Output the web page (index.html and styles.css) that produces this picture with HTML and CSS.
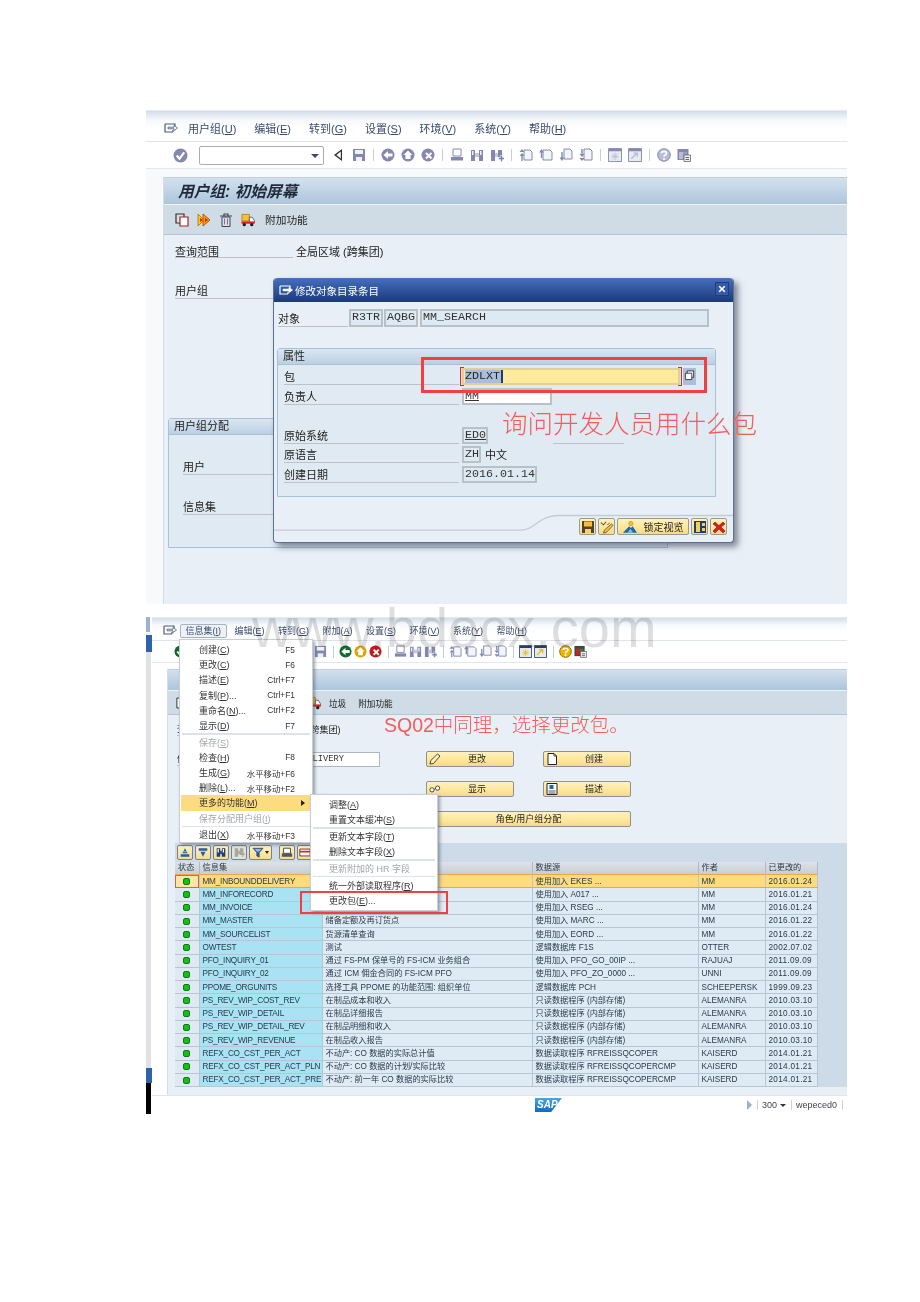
FILE: index.html
```html
<!DOCTYPE html>
<html lang="zh-CN">
<head>
  <meta charset="UTF-8">
  <title>SQ01 / SQ02</title>
  <link rel="stylesheet" href="styles.css">
</head>
<body>
  <!-- icon set -->
  <svg class="defs" aria-hidden="true">
    <symbol id="i-menu" viewBox="0 0 14 11"><path d="M1 1h10v2M1 1v8h8M9 9V7M4 5h6M4 5" fill="none" stroke="currentColor" stroke-width="1.2"/><path d="M4 4.2h6V2.5L13.5 5 10 7.5V5.8H4z" fill="#fff" stroke="currentColor" stroke-width=".8"/></symbol>
    <symbol id="i-check" viewBox="0 0 14 14"><circle cx="7" cy="7" r="6.5" fill="currentColor"/><path d="M3.5 7l2.5 3 4.500-6" fill="none" stroke="#fff" stroke-width="2"/></symbol>
    <symbol id="i-back" viewBox="0 0 14 14"><circle cx="7" cy="7" r="6.500" fill="currentColor"/><path d="M2.500 7L7 3v2.500h4.500v3H7V11z" fill="#fff"/></symbol>
    <symbol id="i-up" viewBox="0 0 14 14"><circle cx="7" cy="7" r="6.500" fill="currentColor"/><path d="M7 2.500L11.500 7H9.500v4h-5V7H2.500z" fill="#fff"/></symbol>
    <symbol id="i-x" viewBox="0 0 14 14"><circle cx="7" cy="7" r="6.500" fill="currentColor"/><path d="M5 5l5.500 5.500M10.500 5L5 10.500" stroke="#fff" stroke-width="2"/></symbol>
    <symbol id="i-save" viewBox="0 0 14 14"><path d="M1 1h12v12H1z" fill="currentColor"/><path d="M3 2h8v4H3z" fill="#eef1f6"/><path d="M4 9h6v4H4z" fill="#eef1f6"/></symbol>
    <symbol id="i-print" viewBox="0 0 14 14"><path d="M3 1h8v7H3z" fill="#fff" stroke="currentColor"/><path d="M1 9h12v3.500H1z" fill="currentColor"/></symbol>
    <symbol id="i-find" viewBox="0 0 14 14"><path d="M1 2h4v11H1zM9 2h4v11H9z" fill="currentColor"/><path d="M5 5h4v4H5z" fill="#c5c8d8"/><path d="M2 3h1.500v4H2zM10 3h1.500v4H10z" fill="#eef"/></symbol>
    <symbol id="i-findp" viewBox="0 0 14 14"><path d="M1 2h4v11H1zM8 2h4v7H8z" fill="currentColor"/><path d="M5 5h3v4H5z" fill="#c5c8d8"/><path d="M10.500 7.500h2v2h2v2h-2v2h-2v-2h-2v-2h2z" fill="#7c80a8" stroke="#fff" stroke-width=".5"/></symbol>
    <symbol id="i-first" viewBox="0 0 14 14"><path d="M5 2h6l2 2v8H5z" fill="#f4f5f9" stroke="currentColor"/><path d="M3 1L.5 4h5zM3 5L.5 8h5z" fill="currentColor"/><path d="M2.300 8h1.400v5H2.300z" fill="currentColor"/></symbol>
    <symbol id="i-prev" viewBox="0 0 14 14"><path d="M4 2h7l2 2v8H4z" fill="#f4f5f9" stroke="currentColor"/><path d="M2.500 1L0 4.500h5z" fill="currentColor"/><path d="M1.800 4h1.400v6H1.800z" fill="currentColor"/></symbol>
    <symbol id="i-next" viewBox="0 0 14 14"><path d="M5 1h6l2 2v8H5z" fill="#f4f5f9" stroke="currentColor"/><path d="M3 13L.5 9.500h5z" fill="currentColor"/><path d="M2.300 4h1.400v6H2.300z" fill="currentColor"/></symbol>
    <symbol id="i-last" viewBox="0 0 14 14"><path d="M5 1h6l2 2v9H5z" fill="#f4f5f9" stroke="currentColor"/><path d="M3 9L.5 6h5zM3 13L.5 10h5z" fill="currentColor"/><path d="M2.300 1h1.400v5H2.300z" fill="currentColor"/></symbol>
    <symbol id="i-win1" viewBox="0 0 15 15"><path d="M.5.5h14v14H.5z" fill="#e8eaf2" stroke="currentColor"/><path d="M1 1h13v2.500H1z" fill="currentColor"/><path d="M7.500 5v8M3.500 9h8M4.500 6l6 6M10.500 6l-6 6" stroke="var(--mark)" stroke-width="1"/></symbol>
    <symbol id="i-win2" viewBox="0 0 15 15"><path d="M.5.5h14v14H.5z" fill="#e8eaf2" stroke="currentColor"/><path d="M1 1h13v2.500H1z" fill="currentColor"/><path d="M3.500 11.500l6-6M6 5.500h4v4" fill="none" stroke="var(--mark)" stroke-width="1.500"/></symbol>
    <symbol id="i-help" viewBox="0 0 14 14"><circle cx="7" cy="7" r="6.300" fill="var(--mark)" stroke="currentColor" stroke-width="1"/><path d="M4.500 5.300C4.500 2.800 9.500 2.800 9.500 5.300 9.500 7 7 7 7 8.800" fill="none" stroke="#fff" stroke-width="1.700"/><circle cx="7" cy="11" r="1.100" fill="#fff"/></symbol>
    <symbol id="i-custom" viewBox="0 0 14 14"><path d="M.5 1h11v11H.5z" fill="currentColor"/><path d="M2 4h4v7H2z" fill="var(--mark)"/><path d="M6 4h4v3H6z" fill="var(--mark2)"/><path d="M7 7h6.500v6.500H7z" fill="#eef0f4" stroke="#666" stroke-width=".8"/><path d="M8.500 9.500h3.500M8.500 11.500h3.500" stroke="#666"/></symbol>

    <symbol id="i-copy" viewBox="0 0 14 14"><path d="M1 1h8v9H1z" fill="#d9dde6" stroke="#333" stroke-width="1.200"/><path d="M5 4h8v9H5z" fill="#fff" stroke="#a22" stroke-width="1.200"/></symbol>
    <symbol id="i-fwd" viewBox="0 0 14 14"><path d="M1 1l6 6-6 6z" fill="#fc0" stroke="#a70" stroke-width=".8"/><path d="M6 1l7 6-7 6z" fill="#f90" stroke="#a40" stroke-width=".8"/><path d="M3 5l3 2-3 2zM8 5l3 2-3 2z" fill="#d22"/></symbol>
    <symbol id="i-trash" viewBox="0 0 14 14"><path d="M1 3h12M5 3V1h4v2" fill="none" stroke="#445" stroke-width="1.200"/><path d="M3 4h8v9.500H3z" fill="#dde" stroke="#445"/><path d="M5.500 5.500v6M8.500 5.500v6" stroke="#778"/></symbol>
    <symbol id="i-truck" viewBox="0 0 15 14"><path d="M1 1h8v7H1z" fill="#fb3" stroke="#a70" stroke-width=".8"/><path d="M9 4h3l2.500 4v2H9z" fill="#fff" stroke="#444" stroke-width=".8"/><path d="M.5 8.500h14v2.500H.5z" fill="#d22"/><circle cx="3.500" cy="12" r="1.800" fill="#222"/><circle cx="11.500" cy="12" r="1.800" fill="#222"/></symbol>

    <symbol id="i-bsave" viewBox="0 0 14 14"><path d="M1 1h12v12H1z" fill="#4a4436"/><path d="M3 1.500h8v5H3z" fill="#fb3"/><path d="M4 9h6v4H4z" fill="#fc6"/></symbol>
    <symbol id="i-pencheck" viewBox="0 0 16 14"><path d="M1 2l3 2.500L7 1" fill="none" stroke="#555" stroke-width="1.300"/><path d="M13 3.500l2 1.500-7.500 8L4 14l1-3.500z" fill="#fb3" stroke="#444" stroke-width=".8"/><path d="M8 3.500l1 1L11 2" fill="none" stroke="#555"/></symbol>
    <symbol id="i-person" viewBox="0 0 16 14"><circle cx="9" cy="3" r="2.500" fill="#fb3" stroke="#975" stroke-width=".5"/><path d="M0 13.500L7 6l2 2 2-2 5 7.500z" fill="#26a"/><path d="M5 13.500L8.500 9l3 4.500z" fill="#8bd"/></symbol>
    <symbol id="i-fsave" viewBox="0 0 14 14"><path d="M1 1h12v12H1z" fill="#1d3e78"/><path d="M3 2h4v10H3z" fill="#fc5"/><path d="M9 3h3v3H9zM9 8h3v3H9z" fill="#fc5"/></symbol>
    <symbol id="i-cross" viewBox="0 0 14 14"><path d="M3 2l4 3.500L11 2l2 2-4 3 4 4-2 2-4-4-4 4-2-2 4-4-4-3z" fill="#d81e1e" stroke="#7a1212" stroke-width=".6"/></symbol>
    <symbol id="i-vh" viewBox="0 0 12 12"><path d="M3.500 1h7v7h-7z" fill="#fff" stroke="#223" stroke-width=".9"/><path d="M1.500 3.500h7v7h-7z" fill="#fff" stroke="#223" stroke-width=".9"/></symbol>

    <symbol id="i-pencil" viewBox="0 0 12 12"><path d="M8.500 1l2.500 2-6.500 7.500L1 11l.8-3.500z" fill="#fff2b0" stroke="#333" stroke-width=".9"/></symbol>
    <symbol id="i-glasses" viewBox="0 0 14 12"><circle cx="3.500" cy="7" r="2.500" fill="#fff" stroke="#333"/><circle cx="10" cy="5" r="2.500" fill="#fff" stroke="#333"/><path d="M6 6.500l1.500-1" stroke="#333"/></symbol>
    <symbol id="i-page" viewBox="0 0 10 12"><path d="M1 .5h6l2.500 2.500v8.500H1z" fill="#fff" stroke="#222"/><path d="M7 .5V3h2.500" fill="none" stroke="#222" stroke-width=".8"/></symbol>
    <symbol id="i-descr" viewBox="0 0 11 12"><path d="M.5.5h10v11H.5z" fill="#fff" stroke="#222"/><path d="M3 2h4v4H3z" fill="#26a"/><path d="M2 8h7M2 10h7" stroke="#555"/></symbol>

    <symbol id="i-abc" viewBox="0 0 14 12"><path d="M7 1l3 6H4z" fill="#2a60a8"/><path d="M2 8h10v3H2z" fill="#2a60a8"/><path d="M5 5h4" stroke="#fb3"/></symbol>
    <symbol id="i-cba" viewBox="0 0 14 12"><path d="M2 1h10v3H2z" fill="#2a60a8"/><path d="M4 5h6l-3 6z" fill="#2a60a8"/></symbol>
    <symbol id="i-bino" viewBox="0 0 14 12"><path d="M2 1h4v10H2zM8 1h4v10H8z" fill="#1d3e78"/><path d="M6 4h2v4H6z" fill="#1d3e78"/><path d="M3 2h1.500v4H3zM9 2h1.500v4H9z" fill="#fff"/></symbol>
    <symbol id="i-binop" viewBox="0 0 14 12"><path d="M2 1h4v10H2zM8 1h4v8H8z" fill="#a9a79a"/><path d="M6 4h2v4H6z" fill="#a9a79a"/><path d="M9 8h5M11.500 6v5" stroke="#a9a79a" stroke-width="1.500"/></symbol>
    <symbol id="i-funnel" viewBox="0 0 14 12"><path d="M1 1h12L8.500 6v5.500l-3-1.500V6z" fill="#2a60a8" stroke="#123" stroke-width=".5"/><path d="M3 2h8L8 5H6z" fill="#9bd"/></symbol>
    <symbol id="i-sheet" viewBox="0 0 14 12"><path d="M3 1h8v6H3z" fill="#fff" stroke="#333"/><path d="M1 7h12v4H1z" fill="#556"/></symbol>
    <symbol id="i-cols" viewBox="0 0 14 12"><path d="M1 2h12v8H1z" fill="#fff" stroke="#333"/><path d="M1 5h12" stroke="#d22" stroke-width="2"/></symbol>
  </svg>

  <div class="page">
    <!-- first screenshot: maintain user group -->
    <section class="shot shot-a">
      <div class="menubar">
        <svg class="menu-ico"><use href="#i-menu"/></svg>
        <span>用户组(<u>U</u>)</span><span>编辑(<u>E</u>)</span><span>转到(<u>G</u>)</span><span>设置(<u>S</u>)</span><span>环境(<u>V</u>)</span><span>系统(<u>Y</u>)</span><span>帮助(<u>H</u>)</span>
      </div>
      <div class="toolbar">
        <svg class="ico wide"><use href="#i-check"/></svg>
        <div class="combo"><i class="caret"></i></div>
        <i class="back-tri"></i>
        <svg class="ico save"><use href="#i-save"/></svg>
        <i class="sep"></i>
        <svg class="ico"><use href="#i-back"/></svg><svg class="ico"><use href="#i-up"/></svg><svg class="ico"><use href="#i-x"/></svg>
        <i class="sep"></i>
        <svg class="ico"><use href="#i-print"/></svg><svg class="ico"><use href="#i-find"/></svg><svg class="ico"><use href="#i-findp"/></svg>
        <i class="sep"></i>
        <svg class="ico"><use href="#i-first"/></svg><svg class="ico"><use href="#i-prev"/></svg><svg class="ico"><use href="#i-next"/></svg><svg class="ico"><use href="#i-last"/></svg>
        <i class="sep"></i>
        <svg class="ico"><use href="#i-win1"/></svg><svg class="ico"><use href="#i-win2"/></svg>
        <i class="sep"></i>
        <svg class="ico"><use href="#i-help"/></svg><svg class="ico"><use href="#i-custom"/></svg>
      </div>
      <div class="panel">
        <h1 class="title">用户组: 初始屏幕</h1>
        <div class="apptools">
          <svg class="ico"><use href="#i-copy"/></svg><svg class="ico"><use href="#i-fwd"/></svg><svg class="ico"><use href="#i-trash"/></svg><svg class="ico"><use href="#i-truck"/></svg>
          <span class="apptext">附加功能</span>
        </div>
        <div class="panel-body">
          <div class="scope"><span class="lbl">查询范围</span><span>全局区域 (跨集团)</span></div>
          <div class="usergroup"><span class="lbl">用户组</span></div>
          <div class="groupbox assign">
            <div class="group-head">用户组分配</div>
            <div class="assign-row"><span class="lbl">用户</span></div>
            <div class="assign-row"><span class="lbl">信息集</span></div>
          </div>
        </div>
      </div>

      <!-- modal dialog -->
      <div class="dialog">
        <div class="dialog-title">
          <svg class="menu-ico light"><use href="#i-menu"/></svg>
          <span>修改对象目录条目</span>
          <span class="dialog-close"><svg viewBox="0 0 10 10"><path d="M1.500 1.500l7 7M8.500 1.500l-7 7" stroke="#fff" stroke-width="2"/></svg></span>
        </div>
        <div class="object-row">
          <span class="lbl obj-lbl">对象</span>
          <span class="field ro w34">R3TR</span><span class="field ro w34">AQBG</span><span class="field ro w-search">MM_SEARCH</span>
        </div>
        <div class="groupbox attrs">
          <div class="group-head">属性</div>
          <div class="attr-list">
            <div class="attr-row"><span class="lbl attr-lbl">包</span><span class="field focus"><b>ZDLXT</b></span><span class="vh"><svg viewBox="0 0 12 12"><use href="#i-vh"/></svg></span></div>
            <div class="attr-row gap-after"><span class="lbl attr-lbl">负责人</span><span class="field input"><u>MM</u></span></div>
            <div class="attr-row tight"><span class="lbl attr-lbl">原始系统</span><span class="field ro w26"><u>ED0</u></span></div>
            <div class="attr-row"><span class="lbl attr-lbl">原语言</span><span class="field ro w19">ZH</span><span class="lang">中文</span></div>
            <div class="attr-row"><span class="lbl attr-lbl">创建日期</span><span class="field ro w75">2016.01.14</span></div>
          </div>
        </div>
        <div class="dialog-foot">
          <svg class="foot-curve" viewBox="0 0 461 34" preserveAspectRatio="none"><path d="M0 25H248C262 25 266 14 285 14H461" fill="none" stroke="#c3ccd6"/></svg>
          <span class="key"><svg class="key-ico"><use href="#i-bsave"/></svg></span>
          <span class="key"><svg class="key-ico"><use href="#i-pencheck"/></svg></span>
          <span class="key key-text"><svg class="key-ico"><use href="#i-person"/></svg>锁定视览</span>
          <span class="key"><svg class="key-ico"><use href="#i-fsave"/></svg></span>
          <span class="key"><svg class="key-ico"><use href="#i-cross"/></svg></span>
        </div>
      </div>

      <div class="redbox box-package"></div>
      <p class="note note-a">询问开发人员用什么包</p>
      <i class="stray-line"></i>
    </section>

    <!-- second screenshot: infoset -->
    <section class="shot shot-b">
      <div class="strip">
        <i class="strip-w"></i><i class="strip-blue"></i><i class="strip-g"></i><i class="strip-blue2"></i><i class="strip-k"></i>
      </div>
      <div class="window">
        <div class="menubar small">
          <svg class="menu-ico"><use href="#i-menu"/></svg>
          <span class="open">信息集(<u>I</u>)</span><span>编辑(<u>E</u>)</span><span>转到(<u>G</u>)</span><span>附加(<u>A</u>)</span><span>设置(<u>S</u>)</span><span>环境(<u>V</u>)</span><span>系统(<u>Y</u>)</span><span>帮助(<u>H</u>)</span>
        </div>
        <div class="toolbar small">
          <svg class="ico tone-green"><use href="#i-check"/></svg>
          <div class="combo small-combo"></div>
          <svg class="ico"><use href="#i-save"/></svg>
          <i class="sep"></i>
          <svg class="ico tone-green"><use href="#i-back"/></svg><svg class="ico tone-orange"><use href="#i-up"/></svg><svg class="ico tone-red"><use href="#i-x"/></svg>
          <i class="sep"></i>
          <svg class="ico"><use href="#i-print"/></svg><svg class="ico"><use href="#i-find"/></svg><svg class="ico"><use href="#i-findp"/></svg>
          <i class="sep"></i>
          <svg class="ico"><use href="#i-first"/></svg><svg class="ico"><use href="#i-prev"/></svg><svg class="ico"><use href="#i-next"/></svg><svg class="ico"><use href="#i-last"/></svg>
          <i class="sep"></i>
          <svg class="ico tone-dark"><use href="#i-win1"/></svg><svg class="ico tone-dark"><use href="#i-win2"/></svg>
          <i class="sep"></i>
          <svg class="ico tone-help"><use href="#i-help"/></svg><svg class="ico tone-custom"><use href="#i-custom"/></svg>
        </div>
        <div class="panel">
          <div class="title"></div>
          <div class="apptools">
            <svg class="ico hidden-d"><use href="#i-page"/></svg>
            <svg class="ico truck-b"><use href="#i-truck"/></svg>
            <span class="apptext">垃圾</span><span class="apptext">附加功能</span>
          </div>
          <div class="panel-grid">
            <span class="lbl grid-lbl">查询范围</span>
            <span class="grid-scope">全局区域 (跨集团)</span>
            <span class="lbl grid-lbl">信息集</span>
            <span class="field input grid-input">MM_INBOUNDDELIVERY</span>
            <span class="btn btn-c1"><svg class="btn-ico"><use href="#i-pencil"/></svg>更改</span>
            <span class="btn btn-c2"><svg class="btn-ico"><use href="#i-page"/></svg>创建</span>
            <span class="btn btn-c1 btn-r3"><svg class="btn-ico"><use href="#i-glasses"/></svg>显示</span>
            <span class="btn btn-c2 btn-r3"><svg class="btn-ico"><use href="#i-descr"/></svg>描述</span>
            <span class="btn btn-wide">角色/用户组分配</span>
          </div>
          <div class="alv-wrap">
            <div class="alv">
              <div class="alv-tools">
                <span class="tkey"><svg><use href="#i-abc"/></svg></span>
                <span class="tkey"><svg><use href="#i-cba"/></svg></span>
                <span class="tkey"><svg><use href="#i-bino"/></svg></span>
                <span class="tkey off"><svg><use href="#i-binop"/></svg></span>
                <span class="tkey drop"><svg><use href="#i-funnel"/></svg><i></i></span>
                <span class="tkey"><svg><use href="#i-sheet"/></svg></span>
                <span class="tkey"><svg><use href="#i-cols"/></svg></span>
              </div>
              <table class="grid">
                <colgroup><col class="c-st"><col class="c-set"><col class="c-desc"><col class="c-src"><col class="c-auth"><col class="c-date"></colgroup>
                <thead><tr><th class="st-head">状态</th><th>信息集</th><th></th><th>数据源</th><th>作者</th><th>已更改的</th></tr></thead>
                <tbody>
                  <tr class="sel"><td class="st first"><i class="led"></i></td><td>MM_INBOUNDDELIVERY</td><td>内向交货</td><td>使用加入 EKES ...</td><td>MM</td><td class="date">2016.01.24</td></tr>
                  <tr><td class="st"><i class="led"></i></td><td class="key-col">MM_INFORECORD</td><td>采购信息记录</td><td>使用加入 A017 ...</td><td>MM</td><td class="date">2016.01.21</td></tr>
                  <tr><td class="st"><i class="led"></i></td><td class="key-col">MM_INVOICE</td><td>发票</td><td>使用加入 RSEG ...</td><td>MM</td><td class="date">2016.01.24</td></tr>
                  <tr><td class="st"><i class="led"></i></td><td class="key-col">MM_MASTER</td><td>储备定额及再订货点</td><td>使用加入 MARC ...</td><td>MM</td><td class="date">2016.01.22</td></tr>
                  <tr><td class="st"><i class="led"></i></td><td class="key-col">MM_SOURCELIST</td><td>货源清单查询</td><td>使用加入 EORD ...</td><td>MM</td><td class="date">2016.01.22</td></tr>
                  <tr><td class="st"><i class="led"></i></td><td class="key-col">OWTEST</td><td>测试</td><td>逻辑数据库 F1S</td><td>OTTER</td><td class="date">2002.07.02</td></tr>
                  <tr><td class="st"><i class="led"></i></td><td class="key-col">PFO_INQUIRY_01</td><td>通过 FS-PM 保单号的 FS-ICM 业务组合</td><td>使用加入 PFO_GO_00IP ...</td><td>RAJUAJ</td><td class="date">2011.09.09</td></tr>
                  <tr><td class="st"><i class="led"></i></td><td class="key-col">PFO_INQUIRY_02</td><td>通过 ICM 佣金合同的 FS-ICM PFO</td><td>使用加入 PFO_ZO_0000 ...</td><td>UNNI</td><td class="date">2011.09.09</td></tr>
                  <tr><td class="st"><i class="led"></i></td><td class="key-col">PPOME_ORGUNITS</td><td>选择工具 PPOME 的功能范围: 组织单位</td><td>逻辑数据库 PCH</td><td>SCHEEPERSK</td><td class="date">1999.09.23</td></tr>
                  <tr><td class="st"><i class="led"></i></td><td class="key-col">PS_REV_WIP_COST_REV</td><td>在制品成本和收入</td><td>只读数据程序 (内部存储)</td><td>ALEMANRA</td><td class="date">2010.03.10</td></tr>
                  <tr><td class="st"><i class="led"></i></td><td class="key-col">PS_REV_WIP_DETAIL</td><td>在制品详细报告</td><td>只读数据程序 (内部存储)</td><td>ALEMANRA</td><td class="date">2010.03.10</td></tr>
                  <tr><td class="st"><i class="led"></i></td><td class="key-col">PS_REV_WIP_DETAIL_REV</td><td>在制品明细和收入</td><td>只读数据程序 (内部存储)</td><td>ALEMANRA</td><td class="date">2010.03.10</td></tr>
                  <tr><td class="st"><i class="led"></i></td><td class="key-col">PS_REV_WIP_REVENUE</td><td>在制品收入报告</td><td>只读数据程序 (内部存储)</td><td>ALEMANRA</td><td class="date">2010.03.10</td></tr>
                  <tr><td class="st"><i class="led"></i></td><td class="key-col">REFX_CO_CST_PER_ACT</td><td>不动产: CO 数据的实际总计值</td><td>数据读取程序 RFREISSQCOPER</td><td>KAISERD</td><td class="date">2014.01.21</td></tr>
                  <tr><td class="st"><i class="led"></i></td><td class="key-col">REFX_CO_CST_PER_ACT_PLN</td><td>不动产: CO 数据的计划/实际比较</td><td>数据读取程序 RFREISSQCOPERCMP</td><td>KAISERD</td><td class="date">2014.01.21</td></tr>
                  <tr><td class="st"><i class="led"></i></td><td class="key-col">REFX_CO_CST_PER_ACT_PRE</td><td>不动产: 前一年 CO 数据的实际比较</td><td>数据读取程序 RFREISSQCOPERCMP</td><td>KAISERD</td><td class="date">2014.01.21</td></tr>
                </tbody>
              </table>
            </div>
          </div>
        </div>
        <div class="statusbar">
          <div class="sap-logo">SAP</div>
          <i class="run-tri"></i>
          <i class="st-sep"></i>
          <span class="st-client">300</span><i class="st-caret"></i>
          <i class="st-sep"></i>
          <span class="st-host">wepeced0</span>
          <i class="st-sep"></i>
          <span class="st-host">0</span>
        </div>
      </div>

      <!-- open menus -->
      <div class="menu menu-main">
        <div class="item"><span>创建(<u>C</u>)</span><span class="accel">F5</span></div>
        <div class="item"><span>更改(<u>C</u>)</span><span class="accel">F6</span></div>
        <div class="item"><span>描述(<u>E</u>)</span><span class="accel">Ctrl+F7</span></div>
        <div class="item"><span>复制(<u>P</u>)...</span><span class="accel">Ctrl+F1</span></div>
        <div class="item"><span>重命名(<u>N</u>)...</span><span class="accel">Ctrl+F2</span></div>
        <div class="item"><span>显示(<u>D</u>)</span><span class="accel">F7</span></div>
        <hr>
        <div class="item off"><span>保存(<u>S</u>)</span></div>
        <div class="item"><span>检查(<u>H</u>)</span><span class="accel">F8</span></div>
        <div class="item"><span>生成(<u>G</u>)</span><span class="accel">水平移动+F6</span></div>
        <div class="item"><span>删除(<u>L</u>)...</span><span class="accel">水平移动+F2</span></div>
        <div class="item hot"><span>更多的功能(<u>M</u>)</span><i class="arrow"></i></div>
        <div class="item off"><span>保存分配用户组(<u>I</u>)</span></div>
        <hr>
        <div class="item"><span>退出(<u>X</u>)</span><span class="accel">水平移动+F3</span></div>
      </div>
      <div class="menu menu-sub">
        <div class="item"><span>调整(<u>A</u>)</span></div>
        <div class="item"><span>重置文本缓冲(<u>S</u>)</span></div>
        <hr>
        <div class="item"><span>更新文本字段(<u>T</u>)</span></div>
        <div class="item"><span>删除文本字段(<u>X</u>)</span></div>
        <hr>
        <div class="item off"><span>更新附加的 HR 字段</span></div>
        <hr>
        <div class="item"><span>统一外部读取程序(<u>R</u>)</span></div>
        <div class="item"><span>更改包(<u>E</u>)...</span></div>
      </div>

      <div class="redbox box-change"></div>
      <p class="note note-b">SQ02中同理，选择更改包。</p>
    </section>

    <div class="watermark">www.bdocx.com</div>
  </div>
</body>
</html>
```

FILE: styles.css
```css
* {
  box-sizing: border-box;
}

body {
  margin: 0;
  background-color: #fff;
  color: #222;
  font-family: "Liberation Sans", "Noto Sans CJK SC", sans-serif;
}

.defs {
  display: none;
}

.page {
  position: relative;
  height: 1302px;
  padding: 110px 0 0 146px;
}

.shot {
  position: relative;
  width: 701px;
  overflow: hidden;
  background-color: #f8f9fb;
  filter: blur(0.35px);
}

.shot-a {
  height: 494px;
  display: flex;
  flex-direction: column;
  margin-bottom: 13px;
}

.shot-b {
  height: 497px;
  display: flex;
}

/* menu bar and system toolbar */
.menubar {
  height: 32px;
  display: flex;
  align-items: center;
  gap: 18px;
  padding: 4px 0 0 18px;
  background: linear-gradient(#d3deea, #f6f8fb 30%, #fff 60%);
  border-top: 1px solid #e4ebf3;
  border-bottom: 1px solid #dfe4ea;
  font-size: 11px;
  color: #3c4b6b;
  white-space: nowrap;
}

.menu-ico {
  width: 14px;
  height: 11px;
  margin-right: -8px;
  color: #4d5a75;
}

.menu-ico.light {
  margin: 0 2px 0 0;
  color: #fff;
}

.toolbar {
  height: 27px;
  display: flex;
  align-items: center;
  gap: 6px;
  padding-left: 27px;
  background-color: #fff;
  border-bottom: 1px solid #e2e7ee;
  color: #8488b0;
  --mark: #b9bcd4;
  --mark2: #9a9dbb;
  flex: none;
}

.ico {
  width: 14px;
  height: 14px;
  flex: none;
}

.ico.wide {
  width: 15px;
  height: 15px;
}

.combo {
  position: relative;
  width: 125px;
  height: 19px;
  margin-left: 5px;
  background-color: #fff;
  border: 1px solid #a9aeb5;
  border-radius: 2px;
  flex: none;
}

.caret {
  position: absolute;
  right: 4px;
  top: 7px;
  border-top: 4px solid #3c4b6b;
  border-left: 4px solid transparent;
  border-right: 4px solid transparent;
}

.back-tri {
  width: 8px;
  height: 12px;
  margin-left: 4px;
  background-color: #333;
  clip-path: polygon(100% 0, 100% 100%, 0 50%, 100% 0, 85% 20%, 30% 50%, 85% 80%, 85% 20%);
}

.ico.save {
  margin-left: 4px;
}

.sep {
  width: 1px;
  height: 12px;
  margin: 0 1px;
  background-color: #c0d0e2;
  flex: none;
}

/* application area */
.panel {
  flex: 1;
  margin: 8px 0 0 17px;
  display: flex;
  flex-direction: column;
  background-color: #e8eff6;
  border-left: 1px solid #d5dee8;
}

.title {
  height: 28px;
  margin: 0;
  padding: 1px 0 0 14px;
  background: linear-gradient(#d3e1ee, #adc5dc);
  border-top: 1px solid #c3ced9;
  border-bottom: 1px solid #eef3f8;
  font-size: 15.700px;
  font-weight: bold;
  font-style: italic;
  color: #1f2a3a;
  flex: none;
}

.apptools {
  height: 30px;
  display: flex;
  align-items: center;
  gap: 8px;
  padding-left: 11px;
  background-color: #cfdce6;
  border-bottom: 1px solid #b5c5d2;
  flex: none;
}

.apptext {
  margin-left: 2px;
  font-size: 10.700px;
}

.panel-body {
  padding: 8px 0 0 11px;
  font-size: 11px;
}

.lbl {
  display: inline-block;
  border-bottom: 1px solid #bcc2c8;
}

.scope {
  display: flex;
  gap: 3px;
  height: 15px;
}

.scope .lbl {
  width: 118px;
}

.usergroup {
  margin-top: 24px;
  height: 15px;
}

.usergroup .lbl {
  width: 110px;
}

.groupbox {
  background-color: #dfeaf3;
  border: 1px solid #a9c0da;
  border-radius: 3px 3px 0 0;
}

.group-head {
  height: 16px;
  padding-left: 5px;
  background: linear-gradient(#d9e6f1, #bcd0e3);
  border-bottom: 1px solid #a9c0da;
  font-size: 11px;
  line-height: 14px;
}

.assign {
  width: 500px;
  height: 130px;
  margin: 121px 0 0 -7px;
}

.assign-row {
  height: 15px;
  margin: 23px 0 0 14px;
}

.assign-row + .assign-row {
  margin-top: 25px;
}

.assign-row .lbl {
  width: 100px;
}

/* modal dialog */
.dialog {
  position: absolute;
  left: 127px;
  top: 168px;
  width: 461px;
  height: 265px;
  display: flex;
  flex-direction: column;
  background-color: #e8eff6;
  border: 1px solid #5f6f8f;
  border-top: 0;
  border-radius: 4px;
  box-shadow: 4px 4px 6px rgba(55, 65, 85, 0.6);
}

.dialog-title {
  position: relative;
  height: 24px;
  display: flex;
  align-items: center;
  padding-left: 5px;
  background: linear-gradient(#466fbd, #2d5298 55%, #1c3a78);
  border-radius: 4px 4px 0 0;
  font-size: 10.500px;
  color: #fff;
  flex: none;
}

.dialog-close {
  position: absolute;
  right: 4px;
  top: 4px;
  width: 14px;
  height: 14px;
  padding: 2px;
  background-color: #355ba6;
  border: 1px solid #1f3d7a;
}

.dialog-close svg {
  display: block;
}

.object-row {
  display: flex;
  gap: 1px;
  height: 18px;
  margin-top: 7px;
  padding-left: 4px;
  font-size: 11px;
}

.obj-lbl {
  width: 70px;
  padding-top: 1px;
}

.field {
  display: inline-block;
  height: 17px;
  padding: 0 1px;
  border: 2px solid #b9c1c8;
  font-family: "Liberation Mono", "Noto Sans CJK SC", monospace;
  font-size: 11.670px;
  line-height: 13px;
  white-space: nowrap;
  flex: none;
}

.object-row .field {
  height: 18px;
}

.ro {
  background-color: #deeaf3;
  color: #333;
}

.w34 {
  width: 34px;
}

.w-search {
  width: 289px;
  margin-left: 1px;
}

.w26 {
  width: 26px;
}

.w19 {
  width: 19px;
}

.w75 {
  width: 75px;
}

.attrs {
  width: 439px;
  height: 149px;
  margin: 21px 0 0 3px;
}

.attr-list {
  padding: 3px 0 0 6px;
}

.attr-row {
  position: relative;
  display: flex;
  height: 17px;
  margin-bottom: 3px;
  font-size: 11px;
}

.attr-row.gap-after {
  margin-bottom: 22px;
}

.attr-row.tight {
  margin-bottom: 2px;
}

.attr-lbl {
  width: 175px;
  margin-right: 3px;
  padding-top: 3px;
  line-height: 13px;
}

.input {
  background-color: #fff;
  color: #333;
}

.attr-row .input {
  width: 90px;
}

.focus {
  position: relative;
  width: 218px;
  background-color: #feea9a;
  border-color: #dcd196;
  color: #223;
}

.focus b {
  display: inline-block;
  padding-right: 1px;
  background-color: #a9bfd8;
  border-right: 2px solid #1c3a78;
  font-weight: normal;
}

.focus::before,
.focus::after {
  content: "";
  position: absolute;
  top: -3px;
  bottom: -3px;
  width: 3px;
  border: 1px solid #e22;
}

.focus::before {
  left: -4px;
  border-right: 0;
}

.focus::after {
  right: -4px;
  border-left: 0;
}

.vh {
  width: 13px;
  height: 17px;
  margin-left: 3px;
  padding: 2px 1px;
  background-color: #adbfd4;
}

.vh svg {
  display: block;
  width: 11px;
  height: 11px;
}

.lang {
  margin-left: 4px;
  padding-top: 3px;
  line-height: 13px;
}

.dialog-foot {
  position: relative;
  flex: 1;
  display: flex;
  justify-content: flex-end;
  gap: 2px;
  padding: 21px 6px 0 0;
}

.foot-curve {
  position: absolute;
  left: 0;
  top: 0;
  width: 100%;
  height: 100%;
}

.key {
  position: relative;
  width: 17px;
  height: 17px;
  display: flex;
  align-items: center;
  justify-content: center;
  gap: 7px;
  background: linear-gradient(#fff2bd, #fde699 60%, #f2d98e);
  border: 1px solid #9a9a8e;
  border-radius: 2px;
  font-size: 10px;
}

.key-text {
  width: 72px;
}

.key-ico {
  width: 14px;
  height: 14px;
  flex: none;
}

.redbox {
  position: absolute;
  border: 3px solid #f33f3f;
}

.box-package {
  left: 275px;
  top: 247px;
  width: 286px;
  height: 36px;
}

.box-change {
  left: 154px;
  top: 274px;
  width: 148px;
  height: 23px;
  border-width: 2px;
}

.note {
  position: absolute;
  margin: 0;
  color: #f55c5c;
  font-weight: 300;
  white-space: nowrap;
}

.note-a {
  left: 356px;
  top: 297px;
  font-size: 25.500px;
  line-height: 34px;
}

.note-b {
  left: 238px;
  top: 95px;
  font-size: 19.500px;
  line-height: 26px;
}

.stray-line {
  position: absolute;
  left: 407px;
  top: 333px;
  width: 71px;
  height: 1px;
  background-color: #bcc2c8;
}

/* second shot */
.strip {
  width: 6px;
  display: flex;
  flex-direction: column;
  flex: none;
  background-color: #f4f5f7;
}

.strip-w {
  height: 15px;
  background: linear-gradient(90deg, #9db2d2 4px, #fff 4px);
}

.strip-blue {
  height: 17px;
  margin-top: 3px;
  background-color: #2f62a6;
}

.strip-g {
  flex: 1;
  background: linear-gradient(90deg, #dfe1e5 5px, #fff 5px);
}

.strip-blue2 {
  height: 15px;
  background-color: #2f62a6;
}

.strip-k {
  height: 31px;
  background: linear-gradient(90deg, #000 5px, #fff 5px);
}

.window {
  flex: 1;
  min-width: 0;
  display: flex;
  flex-direction: column;
  background-color: #fff;
}

.menubar.small {
  height: 24px;
  gap: 13.500px;
  padding: 3px 0 0 11px;
  font-size: 9px;
  flex: none;
}

.menubar.small .menu-ico {
  margin-right: -11px;
}

.open {
  height: 14px;
  margin-right: -6px;
  padding: 0 5px;
  line-height: 13px;
  background-color: #eef2f7;
  border: 1px solid #a6b3c4;
  border-radius: 2px;
}

.toolbar.small {
  height: 22px;
  gap: 2px;
  padding-left: 22px;
}

.toolbar.small .ico {
  width: 13px;
  height: 13px;
}

.toolbar.small .sep {
  margin: 0 3.500px;
}

.small-combo {
  width: 123px;
  margin: 0;
}

.tone-green {
  color: #0f6b2a;
}

.tone-orange {
  color: #e0a000;
}

.tone-red {
  color: #c21a1a;
}

.tone-dark {
  color: #27405f;
  --mark: #e0c020;
}

.tone-help {
  color: #8a6a00;
  --mark: #f2b400;
}

.tone-custom {
  color: #444;
  --mark: #c22;
  --mark2: #2a8a2a;
}

.window .panel {
  margin: 6px 0 0 15px;
  min-height: 0;
}

.window .title {
  height: 22px;
  padding: 0;
}

.window .apptools {
  height: 24px;
  padding-left: 8px;
  gap: 5px;
}

.window .apptext {
  font-size: 8.600px;
  margin-left: 3px;
}

.window .apptext + .apptext {
  margin-left: 7px;
}

.hidden-d {
  width: 9px;
}

.truck-b {
  margin-left: 117px;
}

.panel-grid {
  display: grid;
  grid-template-columns: 70px 133px 46px 88px 29px 88px;
  grid-auto-rows: 16px;
  row-gap: 14px;
  height: 128px;
  padding: 6px 0 0 9px;
  font-size: 9px;
  align-items: center;
}

.grid-lbl {
  grid-column: 1;
}

.grid-scope {
  grid-column: 2 / 5;
  padding-left: 22px;
}

.grid-input {
  grid-column: 2;
  height: 15px;
  padding: 0 2px;
  border-width: 1px;
  border-color: #b0b6bd;
  font-size: 8.700px;
  line-height: 13px;
}

.btn {
  position: relative;
  height: 16px;
  line-height: 15px;
  text-align: center;
  background: linear-gradient(#fff2bd, #fde699 60%, #f2d98e);
  border: 1px solid #8f9295;
  border-radius: 2px;
}

.btn-c1 {
  grid-column: 4;
  grid-row: 2;
  padding-left: 14px;
}

.btn-c2 {
  grid-column: 6;
  grid-row: 2;
  padding-left: 14px;
}

.btn-r3 {
  grid-row: 3;
}

.btn-wide {
  grid-column: 4 / 7;
  grid-row: 4;
}

.btn-ico {
  position: absolute;
  left: 2px;
  top: 1px;
  width: 12px;
  height: 12px;
}

.alv-wrap {
  flex: 1;
  padding: 0 0 8px 7px;
}

.alv {
  height: 100%;
  background-color: #cddbe8;
}

.alv-tools {
  height: 19px;
  display: flex;
  align-items: center;
  gap: 2px;
  padding-left: 2px;
}

.tkey {
  width: 16px;
  height: 15px;
  display: flex;
  align-items: center;
  justify-content: center;
  background: linear-gradient(#fff2bd, #f6dc8e);
  border: 1px solid #7d7f80;
  border-radius: 2px;
}

.tkey svg {
  width: 12px;
  height: 11px;
}

.tkey.off {
  background: #dfe3da;
}

.tkey.drop {
  width: 23px;
  gap: 1px;
}

.tkey.drop i {
  border-top: 3px solid #222;
  border-left: 2px solid transparent;
  border-right: 2px solid transparent;
}

.tkey.drop + .tkey {
  margin-left: 5px;
}

.grid {
  width: 642px;
  table-layout: fixed;
  border-collapse: collapse;
  font-size: 8.200px;
  line-height: 11px;
  white-space: nowrap;
  color: #2b3a4a;
}

.c-st {
  width: 24px;
}

.c-set {
  width: 123px;
}

.c-desc {
  width: 210px;
}

.c-src {
  width: 166px;
}

.c-auth {
  width: 67px;
}

.c-date {
  width: 52px;
}

.grid th {
  height: 13px;
  padding: 0 0 0 3px;
  background: linear-gradient(#dde2e7, #c6ced6);
  border-right: 1px solid #aeb9c4;
  font-weight: normal;
  text-align: left;
}

.grid td {
  height: 13.250px;
  padding: 0 0 0 3px;
  background-color: #deeaf4;
  border-right: 1px solid #b7c6d3;
  border-bottom: 1px solid #b7c6d3;
  overflow: hidden;
}

.grid td:nth-child(2) {
  padding-left: 3px;
  letter-spacing: -0.200px;
}

.grid .key-col {
  background-color: #a8e2f3;
}

.grid .st {
  padding: 0;
  text-align: center;
  background-color: #dfe9f2;
}

.grid .date {
  letter-spacing: 0.300px;
}

.grid .sel td {
  background-color: #fedb7c;
  border-top: 1px solid #f0a54a;
  border-bottom: 1px solid #f0a54a;
}

.grid .sel .first {
  background-color: #fbe8a0;
  outline: 1px solid #e55;
  outline-offset: -1px;
}

.led {
  display: inline-block;
  width: 7px;
  height: 7px;
  vertical-align: middle;
  background-color: #0c0;
  border: 1px solid #256b3a;
  border-radius: 2px;
}

.statusbar {
  height: 19px;
  display: flex;
  align-items: center;
  padding-left: 383px;
  background-color: #fff;
  border-top: 1px solid #dfe6ee;
  font-size: 9px;
  color: #445;
  flex: none;
}

.statusbar > * {
  flex: none;
}

.sap-logo {
  width: 27px;
  height: 14px;
  padding-left: 2px;
  background: linear-gradient(#4aa6e8, #0f6cc0);
  clip-path: polygon(0 0, 100% 0, 60% 100%, 0 100%);
  font-size: 10px;
  font-weight: bold;
  font-style: italic;
  line-height: 14px;
  color: #fff;
}

.run-tri {
  width: 5px;
  height: 10px;
  margin-left: 185px;
  background-color: #9fb0cc;
  clip-path: polygon(0 0, 100% 50%, 0 100%);
}

.st-sep {
  width: 1px;
  height: 10px;
  margin: 0 4px 0 5px;
  background-color: #c8d0da;
}

.st-caret {
  margin-left: 3px;
  border-top: 3px solid #334;
  border-left: 3px solid transparent;
  border-right: 3px solid transparent;
}

/* open menus */
.menu {
  position: absolute;
  background-color: #fff;
  border: 1px solid #c7ced6;
  font-size: 9px;
  color: #333;
  box-shadow: 2px 2px 3px rgba(70, 80, 95, 0.5);
}

.menu-main {
  left: 33px;
  top: 22px;
  width: 134px;
  height: 204px;
  padding: 2px 1px 0;
}

.menu-sub {
  left: 164px;
  top: 177px;
  width: 128px;
  height: 117px;
  padding: 2px 1px 0;
}

.menu hr {
  height: 1.500px;
  margin: 0 1px;
  border: 0;
  background-color: #dde2e7;
}

.item {
  height: 15.200px;
  display: flex;
  align-items: center;
  justify-content: space-between;
  padding: 0 16px 0 18px;
  white-space: nowrap;
}

.accel {
  font-size: 8.400px;
}

.item.off {
  color: #a2a6ab;
}

.item.hot {
  background-color: #fddc80;
  padding-right: 6px;
}

.menu-sub .item {
  padding-left: 17px;
}

.arrow {
  border-left: 4px solid #222;
  border-top: 3px solid transparent;
  border-bottom: 3px solid transparent;
}

.watermark {
  position: absolute;
  left: 252px;
  top: 596px;
  font-size: 56px;
  line-height: 64px;
  color: rgba(0, 0, 0, 0.13);
  white-space: nowrap;
  pointer-events: none;
}
```
